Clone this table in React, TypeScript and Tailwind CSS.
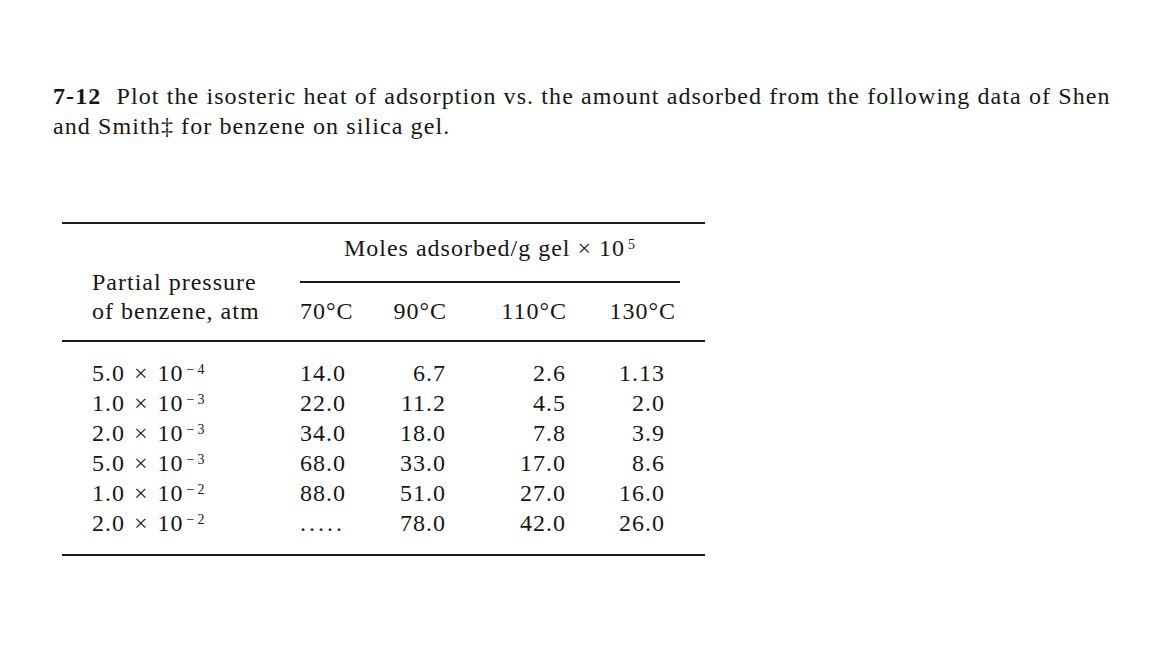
const rows = [
  { p: "5.0", e: "4", v: ["14.0", "6.7", "2.6", "1.13"] },
  { p: "1.0", e: "3", v: ["22.0", "11.2", "4.5", "2.0"] },
  { p: "2.0", e: "3", v: ["34.0", "18.0", "7.8", "3.9"] },
  { p: "5.0", e: "3", v: ["68.0", "33.0", "17.0", "8.6"] },
  { p: "1.0", e: "2", v: ["88.0", "51.0", "27.0", "16.0"] },
  { p: "2.0", e: "2", v: [".....", "78.0", "42.0", "26.0"] },
]

function Exp({ children }: { children: React.ReactNode }) {
  return <sup className="relative -top-[7px] ml-[3px] align-baseline text-[14px] leading-none">{children}</sup>
}

export default function App() {
  return (
    <div className="min-h-[666px] w-[1170px] bg-white pl-[53px] pt-[81px] font-['Liberation_Serif',serif] text-[#161616]">
      <p className="text-[24px] leading-[30px] tracking-[1.1px]">
        <span className="mr-[8px] font-bold">7-12</span> Plot the isosteric heat of adsorption vs. the amount adsorbed from the following data of Shen
        <br />
        and Smith‡ for benzene on silica gel.
      </p>

      <div className="ml-[9px] mt-[81px] w-[643px] border-t-2 border-[#1c1c1c] text-[24px] leading-[30px] tracking-[1px]">
        <div className="flex items-end border-b-2 border-[#1c1c1c] pb-[14px]">
          <div className="w-[238px] pl-[30px] leading-[29px]">
            <div>Partial pressure</div>
            <div>of benzene, atm</div>
          </div>
          <div className="w-[380px] pt-[9px]">
            <div className="text-center">
              Moles adsorbed/g gel × 10<Exp>5</Exp>
            </div>
            <div className="mt-[18px] h-[2px] bg-[#1c1c1c]" />
            <div className="mt-[13px] grid grid-cols-[75px_75px_120px_110px]">
              <span>70°C</span>
              <span className="pr-[3px] text-right">90°C</span>
              <span className="pr-[3px] text-right">110°C</span>
              <span className="pr-[4px] text-right">130°C</span>
            </div>
          </div>
        </div>

        <div className="border-b-2 border-[#1c1c1c] pb-[16px] pt-[16px]">
          {rows.map((r, i) => (
            <div key={i} className="grid grid-cols-[238px_75px_75px_120px_135px]">
              <span className="pl-[30px]">
                {r.p} <span className="mx-[2px]">×</span> 10
                <Exp>
                  −<span className="ml-[2px]">{r.e}</span>
                </Exp>
              </span>
              <span className={r.v[0] === "....." ? "tracking-[3px]" : ""}>{r.v[0]}</span>
              <span className="pr-[4px] text-right">{r.v[1]}</span>
              <span className="pr-[4px] text-right">{r.v[2]}</span>
              <span className="pr-[40px] text-right">{r.v[3]}</span>
            </div>
          ))}
        </div>
      </div>
    </div>
  )
}
